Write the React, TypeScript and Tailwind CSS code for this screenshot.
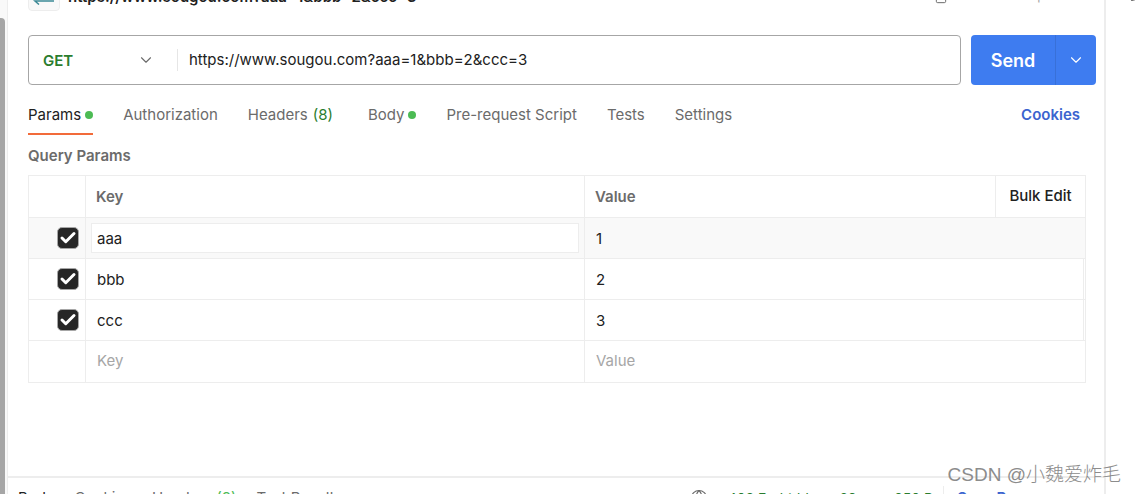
import { useState } from 'react'
import { Check, ChevronDown, Copy, Globe, Pencil } from 'lucide-react'

const tabs = [
  { name: 'Params', dot: true, left: '' },
  { name: 'Authorization', left: 'ml-[30px]' },
  { name: 'Headers', count: 8, left: 'ml-[30px]' },
  { name: 'Body', dot: true, left: 'ml-[35px]' },
  { name: 'Pre-request Script', left: 'ml-[30px]' },
  { name: 'Tests', left: 'ml-[30px]' },
  { name: 'Settings', left: 'ml-[30px]' },
]

const initialRows = [
  { key: 'aaa', value: '1', enabled: true },
  { key: 'bbb', value: '2', enabled: true },
  { key: 'ccc', value: '3', enabled: true },
]

function RequestTitle() {
  return (
    <div className="-mt-[21px] flex h-8 shrink-0 items-center pr-9 pl-5">
      <div className="flex size-8 shrink-0 items-end justify-center rounded border border-[#ededed] bg-[#f9f9f9] pb-[5px] text-[#3d8a96]">
        <svg width="22" height="16" viewBox="0 0 22 16" fill="none" stroke="currentColor" strokeWidth="1.5">
          <path d="M1 4h19l-3-3M21 12H2l4 3.5" />
        </svg>
      </div>
      <h1 className="ml-2 flex-1 pt-1 text-[15px] font-semibold text-[#212121]">https://www.sougou.com?aaa=1&amp;bbb=2&amp;ccc=3</h1>
      <button type="button" aria-label="Duplicate" className="pt-[2px] text-[#6b6b6b]">
        <Copy size={16} strokeWidth={1.5} className="-scale-x-100" />
      </button>
      <button type="button" className="ml-5 pt-[2px] text-[13px] text-[#a6a6a6]">Add description</button>
    </div>
  )
}

function RequestBar() {
  const [url, setUrl] = useState('https://www.sougou.com?aaa=1&bbb=2&ccc=3')
  return (
    <form className="mt-6 flex h-[50px] shrink-0 gap-[10px] pr-2 pl-5" onSubmit={e => e.preventDefault()}>
      <div className="flex min-w-0 flex-1 items-center rounded border border-[#a6a6a6]">
        <div className="relative w-[148px] shrink-0">
          <select aria-label="Method" className="w-full appearance-none bg-transparent pt-[2px] pl-[14px] text-[15px] font-semibold text-[#2a7d2e] outline-none">
            <option>GET</option>
            <option>POST</option>
            <option>PUT</option>
            <option>DELETE</option>
          </select>
          <ChevronDown size={18} strokeWidth={1.5} className="pointer-events-none absolute top-1/2 right-[22px] -translate-y-1/2 text-[#6b6b6b]" />
        </div>
        <div className="h-[22px] w-px bg-[#e6e6e6]" />
        <input
          aria-label="Request URL"
          className="ml-[11px] min-w-0 flex-1 bg-transparent text-[15px] text-[#212121] outline-none"
          value={url}
          onChange={e => setUrl(e.target.value)}
        />
      </div>
      <div className="flex shrink-0 overflow-hidden rounded bg-[#3e7cf0] text-white">
        <button type="submit" className="w-[84px] text-[18px] font-semibold">Send</button>
        <button type="button" aria-label="Send options" className="flex w-[41px] items-center justify-center border-l border-[#3870d8]">
          <ChevronDown size={18} strokeWidth={1.5} />
        </button>
      </div>
    </form>
  )
}

function RequestTabs() {
  const [active, setActive] = useState('Params')
  return (
    <nav className="mt-2 flex h-[42px] shrink-0 pr-6 pl-5">
      {tabs.map(tab => (
        <button
          key={tab.name}
          type="button"
          onClick={() => setActive(tab.name)}
          className={`flex items-center border-b-2 pt-1 ${tab.left} ${active === tab.name ? 'border-[#f26b3a] text-[#212121]' : 'border-transparent text-[#6b6b6b]'}`}
        >
          {tab.name}
          {tab.count && <span className="ml-[5px] text-[#2a7d2e]">({tab.count})</span>}
          {tab.dot && <span className="ml-1 size-2 rounded-full bg-[#4cbb54]" />}
        </button>
      ))}
      <button type="button" className="ml-auto pt-[2px] font-semibold text-[#3b64cf]">Cookies</button>
    </nav>
  )
}

function ParamsTable() {
  const [rows, setRows] = useState(initialRows)

  const update = (index: number, patch: Partial<(typeof initialRows)[number]>) => {
    setRows(rows.map((row, i) => (i === index ? { ...row, ...patch } : row)))
  }

  return (
    <section className="pr-[18px] pl-5">
      <h2 className="mt-[11px] leading-5 font-semibold text-[#6b6b6b]">Query Params</h2>
      <table className="mt-[9px] w-full table-fixed border-collapse text-left">
        <colgroup>
          <col className="w-[57px]" />
          <col />
          <col className="w-[411px]" />
          <col className="w-[90px]" />
        </colgroup>
        <thead>
          <tr className="h-[42px] text-[#6b6b6b]">
            <th className="border border-[#ededed]" />
            <th className="border border-[#ededed] px-[10px] pt-[2px] font-semibold">Key</th>
            <th className="border border-[#ededed] px-[10px] pt-[2px] font-semibold">Value</th>
            <th className="border border-[#ededed] text-center">
              <button type="button" className="font-medium text-[#212121]">Bulk Edit</button>
            </th>
          </tr>
        </thead>
        <tbody>
          {rows.map((row, i) => (
            <tr key={i} className={`h-[41px] ${i === 0 ? 'bg-[#f9f9f9]' : ''}`}>
              <td className="border border-[#ededed]">
                <label className="relative mr-[6px] ml-auto block size-[22px]">
                  <input
                    type="checkbox"
                    aria-label={`Use ${row.key}`}
                    checked={row.enabled}
                    onChange={e => update(i, { enabled: e.target.checked })}
                    className="block size-[22px] appearance-none rounded-[5px] border border-[#a6a6a6] checked:bg-[#262626]"
                  />
                  {row.enabled && <Check size={18} strokeWidth={4} className="pointer-events-none absolute top-[2px] left-[2px] text-white" />}
                </label>
              </td>
              <td className="border border-[#ededed] px-[5px]">
                <input
                  aria-label="Key"
                  value={row.key}
                  onChange={e => update(i, { key: e.target.value })}
                  className={`block h-[30px] w-full border px-[5px] text-[#212121] outline-none ${i === 0 ? 'border-[#ededed] bg-white' : 'border-transparent'}`}
                />
              </td>
              <td colSpan={2} className="border border-[#ededed] pr-px">
                <div className={`flex h-10 items-center border-r px-[5px] ${i === 0 ? 'border-transparent' : 'border-[#ededed]'}`}>
                  <input
                    aria-label="Value"
                    value={row.value}
                    onChange={e => update(i, { value: e.target.value })}
                    className="block h-[30px] w-full border border-transparent px-[5px] text-[#212121] outline-none"
                  />
                </div>
              </td>
            </tr>
          ))}
          <tr className="h-[42px]">
            <td className="border border-[#ededed]" />
            <td className="border border-[#ededed] px-[5px] pb-[2px]">
              <input aria-label="New key" placeholder="Key" className="block h-[30px] w-full border border-transparent px-[5px] outline-none placeholder:text-[#a6a6a6]" />
            </td>
            <td colSpan={2} className="border border-[#ededed] px-[5px] pb-[2px]">
              <input aria-label="New value" placeholder="Value" className="block h-[30px] w-full border border-transparent px-[5px] outline-none placeholder:text-[#a6a6a6]" />
            </td>
          </tr>
        </tbody>
      </table>
    </section>
  )
}

function ResponseBar() {
  return (
    <footer className="mt-auto h-[18px] shrink-0 border-t-2 border-[#ededed]">
      <div className="flex h-10 items-center pl-[10px] whitespace-nowrap text-[#6b6b6b]">
        <button type="button" className="text-[#212121]">Body</button>
        <button type="button" className="ml-5">Cookies</button>
        <button type="button" className="ml-5">Headers <span className="text-[#4cbb54]">(8)</span></button>
        <button type="button" className="ml-5">Test Results</button>
        <div className="ml-auto flex items-center text-[14px] text-[#2a7d2e]">
          <Globe size={18} strokeWidth={1.5} className="text-[#6b6b6b]" />
          <span className="ml-5">403 Forbidden</span>
          <span className="ml-[14px]">69 ms</span>
          <span className="ml-[14px]">250 B</span>
        </div>
        <button type="button" className="ml-[10px] h-6 border-l border-[#ededed] pl-[13px] font-semibold text-[#3b64cf]">Save Response</button>
        <span className="w-9" />
      </div>
    </footer>
  )
}

export default function App() {
  return (
    <div className="relative flex h-screen overflow-hidden bg-white font-['Inter','Noto_Sans',sans-serif] text-[15px]">
      <div className="w-2 shrink-0 border-r border-[#ededed] bg-[#f9f9f9] pt-[18px]">
        <div className="h-full w-[5px] rounded-tr bg-[#a6a6a6]" />
      </div>
      <main className="flex min-w-0 flex-1 flex-col border-r-2 border-[#ededed]">
        <RequestTitle />
        <RequestBar />
        <RequestTabs />
        <ParamsTable />
        <ResponseBar />
      </main>
      <aside className="w-[29px] shrink-0 overflow-hidden pl-6">
        <button type="button" aria-label="Edit" className="-mt-4 block text-[#6b6b6b]">
          <Pencil size={18} strokeWidth={1.5} />
        </button>
      </aside>
      <div className="pointer-events-none absolute right-[14px] bottom-[5px] font-['Liberation_Sans','Noto_Sans_CJK_SC',sans-serif] text-[19px] leading-7 font-light text-[#8c8c8c]">
        CSDN @小魏爱炸毛
      </div>
    </div>
  )
}
